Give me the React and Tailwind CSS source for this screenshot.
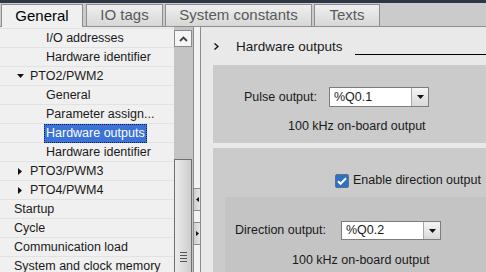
import React from "react";

const treeRows = [
  { label: "I/O addresses", level: 2 },
  { label: "Hardware identifier", level: 2 },
  { label: "PTO2/PWM2", level: 1, open: true },
  { label: "General", level: 2 },
  { label: "Parameter assign...", level: 2 },
  { label: "Hardware outputs", level: 2, selected: true },
  { label: "Hardware identifier", level: 2 },
  { label: "PTO3/PWM3", level: 1, open: false },
  { label: "PTO4/PWM4", level: 1, open: false },
  { label: "Startup", level: 0 },
  { label: "Cycle", level: 0 },
  { label: "Communication load", level: 0 },
  { label: "System and clock memory", level: 0 },
];

const tabs = [
  { label: "General", w: "w-[82px]", active: true },
  { label: "IO tags", w: "w-[77px]" },
  { label: "System constants", w: "w-[147px]" },
  { label: "Texts", w: "w-[66px]" },
];

const Dropdown = ({ value, h }) => (
  <div className={`flex w-[100px] ${h} border border-[#7d7d7d] bg-white`}>
    <div className="flex-1 pl-[4px] flex items-center text-[12.5px] text-[#1a1a1a]">{value}</div>
    <div className="w-[17px] border-l border-[#a8a8a8] bg-gradient-to-b from-[#f6f6f6] to-[#d9d9d9] flex items-center justify-center">
      <svg width="7" height="4" viewBox="0 0 7 4">
        <path d="M0 0h7L3.5 4z" fill="#111" />
      </svg>
    </div>
  </div>
);

const TreeRow = ({ row }) => {
  const pad = row.level === 0 ? "pl-[14px]" : row.level === 1 ? "pl-[17px]" : "pl-[44px]";
  return (
    <div className={`h-[19px] border-t border-[#e2e2e2] flex items-center ${pad}`}>
      {row.level === 1 && (
        <span className="w-[13px] flex items-center">
          {row.open ? (
            <svg width="7" height="4" viewBox="0 0 7 4">
              <path d="M0 0h7L3.5 4z" fill="#111" />
            </svg>
          ) : (
            <svg width="4" height="7" viewBox="0 0 4 7" className="ml-[1px]">
              <path d="M0 0v7l4-3.5z" fill="#111" />
            </svg>
          )}
        </span>
      )}
      {row.selected ? (
        <span className="h-[19px] px-[1px] flex items-center bg-[#3a72d6] text-white border border-dotted border-[#0d1d4a]">
          {row.label}
        </span>
      ) : (
        <span className={row.level === 2 ? "pl-[2px]" : ""}>{row.label}</span>
      )}
    </div>
  );
};

export default function App() {
  return (
    <div
      className="w-[486px] h-[272px] overflow-hidden flex flex-col bg-[#cbcbcb] text-[#1a1a1a]"
      style={{ fontFamily: '"Liberation Sans", Arial, sans-serif' }}
    >
      <div className="h-[3px] bg-[#2f3747]" />
      <div className="h-[24px] flex items-end pl-[1px] gap-[2px] border-b border-[#8e8e8e]">
        {tabs.map((t) =>
          t.active ? (
            <div
              key={t.label}
              className={`${t.w} h-[23px] -mb-px mr-[1px] bg-[#f0f0f0] border border-b-0 border-[#8e8e8e] flex items-center justify-center text-[15px] text-black`}
            >
              {t.label}
            </div>
          ) : (
            <div
              key={t.label}
              className={`${t.w} h-[22px] bg-gradient-to-b from-[#efefef] to-[#d7d7d7] border border-b-0 border-[#8e8e8e] flex items-center justify-center text-[15px] text-[#5a5a5a]`}
            >
              {t.label}
            </div>
          )
        )}
      </div>

      <div className="flex flex-1 min-h-0">
        {/* tree */}
        <div className="w-[174px] bg-[#f0f0f0] pt-[1px] text-[12.5px] overflow-hidden">
          {treeRows.map((r, i) => (
            <TreeRow key={i} row={r} />
          ))}
        </div>

        {/* scrollbar */}
        <div className="w-[19px] bg-[#c4c4c4] flex flex-col pt-[3px]">
          <div className="w-[18px] h-[17px] border border-[#8c8c8c] bg-[#f5f5f5] flex items-center justify-center">
            <svg width="9" height="6" viewBox="0 0 9 6">
              <path d="M1 5l3.5-3.5L8 5" stroke="#444" strokeWidth="1.8" fill="none" />
            </svg>
          </div>
          <div className="h-[112px]" />
          <div className="flex-1 w-[18px] border border-b-0 border-[#6f6f6f] bg-gradient-to-r from-[#ececec] to-[#cdcdcd] flex flex-col items-center">
            <div className="mt-auto mb-[10px] flex flex-col gap-[2px]">
              <div className="w-[7px] h-px bg-[#555]" />
              <div className="w-[7px] h-px bg-[#555]" />
              <div className="w-[7px] h-px bg-[#555]" />
              <div className="w-[7px] h-px bg-[#555]" />
            </div>
          </div>
        </div>

        {/* splitter */}
        <div className="w-[8px] border-x border-[#8c8c8c] bg-[#f3f3f3] flex flex-col">
          <div className="h-[161px]" />
          <div className="h-[23px] border-y border-[#8c8c8c] bg-gradient-to-r from-[#cfcfcf] to-[#e6e6e6] flex items-center justify-center">
            <svg width="3" height="5" viewBox="0 0 3 5">
              <path d="M3 0v5L0 2.5z" fill="#111" />
            </svg>
          </div>
          <div className="h-[11px]" />
          <div className="h-[23px] border-y border-[#8c8c8c] bg-gradient-to-r from-[#cfcfcf] to-[#e6e6e6] flex items-center justify-center">
            <svg width="3" height="5" viewBox="0 0 3 5">
              <path d="M0 0v5l3-2.5z" fill="#111" />
            </svg>
          </div>
        </div>

        {/* right panel */}
        <div className="flex-1 bg-[#e9e9e9] pl-[12px] flex flex-col text-[12.5px]">
          <div className="h-[38px] flex items-center shrink-0 pt-[3px]">
            <svg width="5" height="7" viewBox="0 0 5 7" className="ml-[1px] mt-[-2px]">
              <path d="M0.5 0.5L4 3.5L0.5 6.5" stroke="#111" strokeWidth="1.4" fill="none" />
            </svg>
            <span className="ml-[17px] text-[13.5px] text-[#1a1a1a]">Hardware outputs</span>
            <div className="flex-1 ml-[12px] mt-[13px] h-px bg-black" />
          </div>

          <div className="h-[78px] bg-[#cbcbcb] pt-[22px] shrink-0">
            <div className="flex items-center pl-[31px]">
              <span className="w-[85px]">Pulse output:</span>
              <Dropdown value="%Q0.1" h="h-[20px]" />
            </div>
            <div className="pl-[75px] mt-[10px]">100 kHz on-board output</div>
          </div>

          <div className="flex-1 mt-[5px] bg-[#cbcbcb] flex flex-col">
            <div className="h-[49px] flex items-center pl-[122px] pt-[16px]">
              <svg width="14" height="14" viewBox="0 0 14 14">
                <rect x="0.5" y="0.5" width="13" height="13" rx="1.5" fill="#2f6fc4" stroke="#5a6f8f" />
                <path d="M3 7.2l2.6 2.6L11 4.2" stroke="#fff" strokeWidth="2" fill="none" />
              </svg>
              <span className="ml-[4px]">Enable direction output</span>
            </div>
            <div className="flex-1 ml-[12px] bg-[#c4c4c4] pt-[24px]">
              <div className="flex items-center pl-[10px]">
                <span className="w-[106px]">Direction output:</span>
                <Dropdown value="%Q0.2" h="h-[19px]" />
              </div>
              <div className="pl-[67px] mt-[11px]">100 kHz on-board output</div>
            </div>
          </div>
        </div>
      </div>
    </div>
  );
}
